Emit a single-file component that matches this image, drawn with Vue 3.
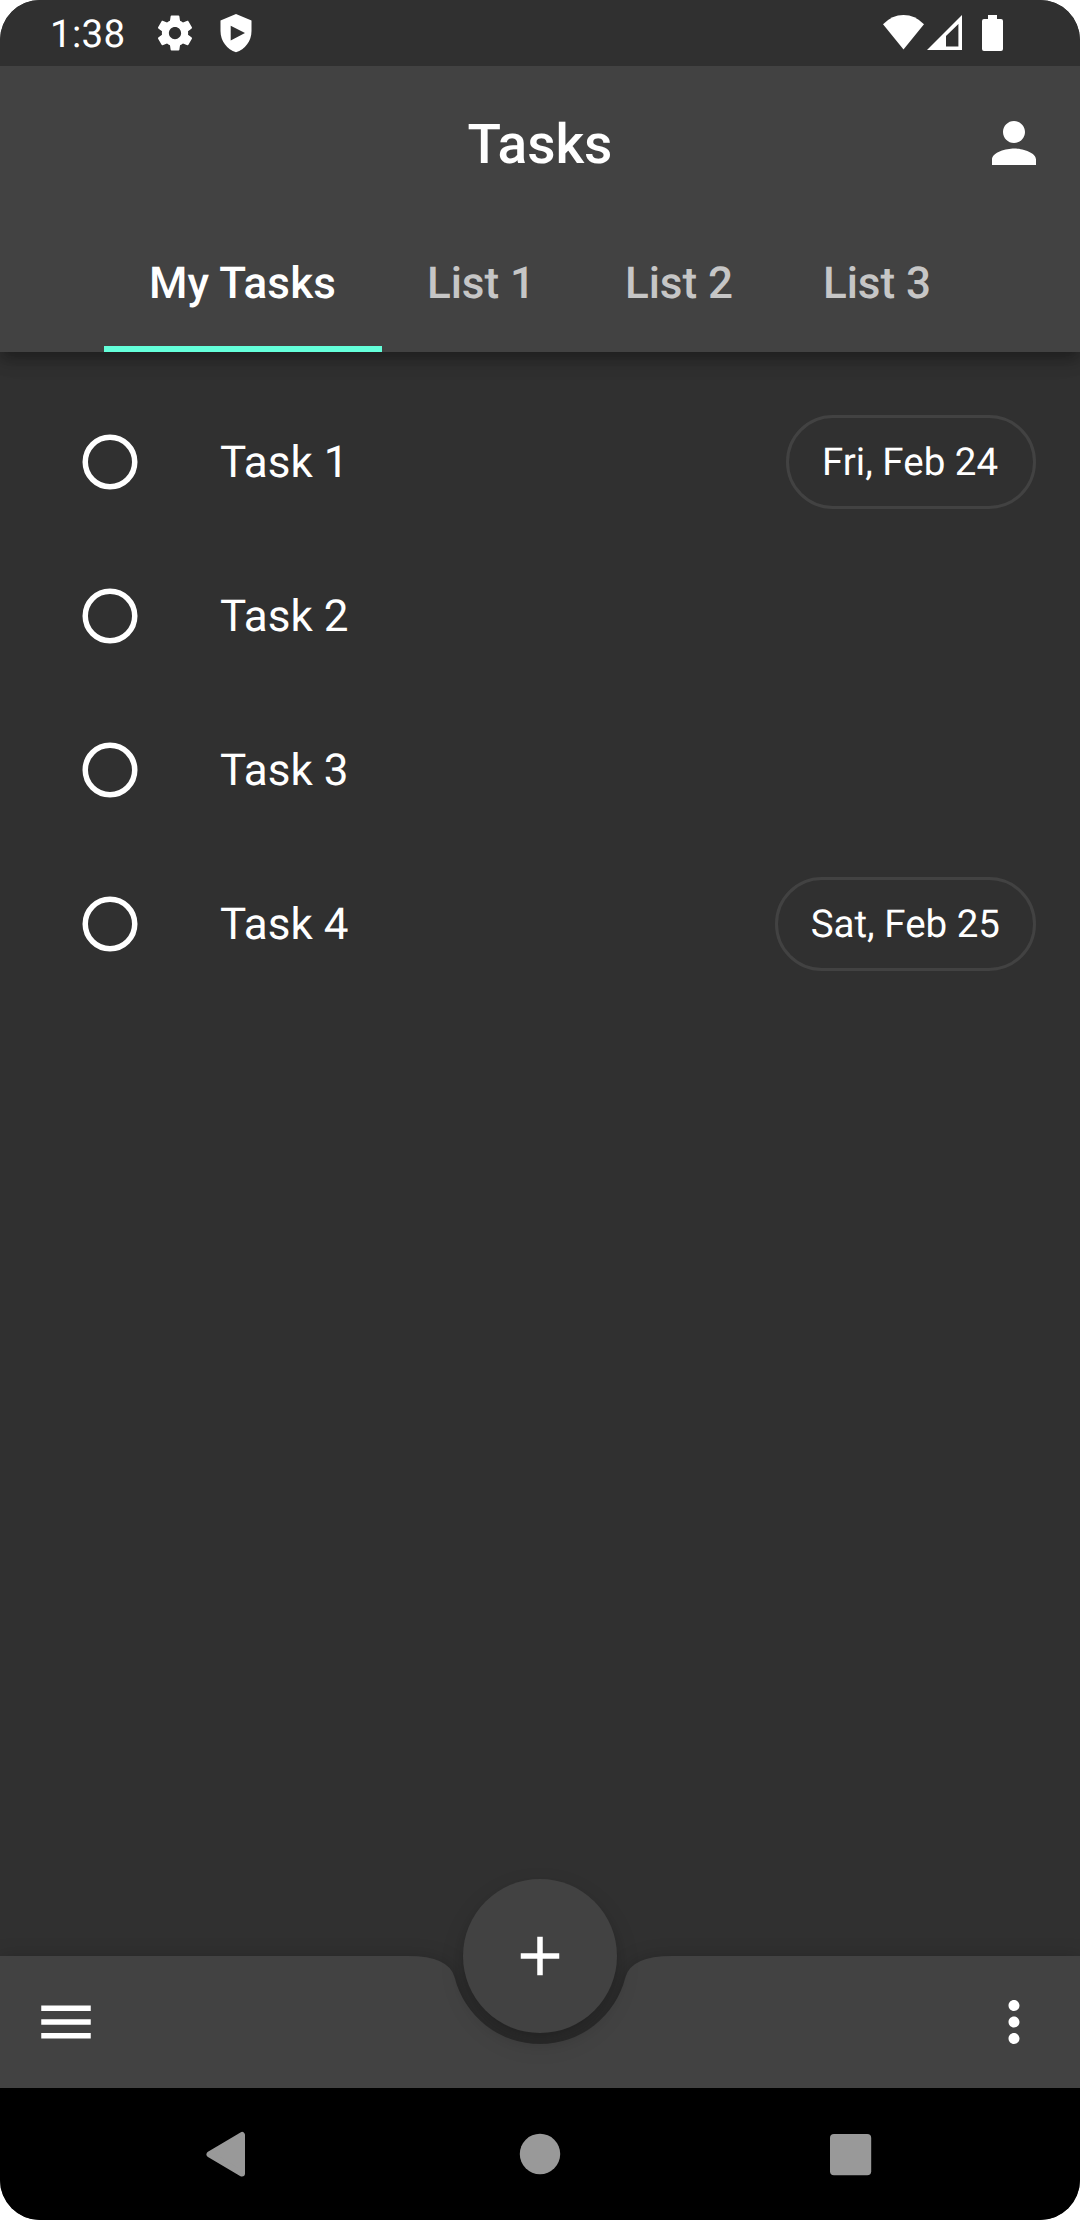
<script setup>
import { ref } from 'vue'

const tabs = ['My Tasks', 'List 1', 'List 2', 'List 3']
const activeTab = ref('My Tasks')
const tasks = [
  { title: 'Task 1', due: 'Fri, Feb 24' },
  { title: 'Task 2' },
  { title: 'Task 3' },
  { title: 'Task 4', due: 'Sat, Feb 25' },
]
</script>

<template>
  <div class="screen">
    <div class="status-bar">
      <span class="clock">1:38</span>
      <svg class="gear" viewBox="0 0 24 24" width="42" height="42">
        <path d="M19.43 12.98c.04-.32.07-.64.07-.98s-.03-.66-.07-.98l2.11-1.65c.19-.15.24-.42.12-.64l-2-3.46c-.12-.22-.39-.3-.61-.22l-2.49 1c-.52-.4-1.08-.73-1.69-.98l-.38-2.65C14.46 2.18 14.25 2 14 2h-4c-.25 0-.46.18-.49.42l-.38 2.65c-.61.25-1.17.59-1.69.98l-2.49-1c-.23-.09-.49 0-.61.22l-2 3.46c-.13.22-.07.49.12.64l2.11 1.65c-.04.32-.07.65-.07.98s.03.66.07.98l-2.11 1.65c-.19.15-.24.42-.12.64l2 3.46c.12.22.39.3.61.22l2.49-1c.52.4 1.08.73 1.69.98l.38 2.65c.03.24.24.42.49.42h4c.25 0 .46-.18.49-.42l.38-2.65c.61-.25 1.17-.59 1.69-.98l2.49 1c.23.09.49 0 .61-.22l2-3.46c.12-.22.07-.49-.12-.64l-2.11-1.65zM12 15.5c-1.93 0-3.5-1.57-3.5-3.5s1.57-3.5 3.5-3.5 3.5 1.57 3.5 3.5-1.57 3.5-3.5 3.5z" />
      </svg>
      <svg class="shield" viewBox="0 0 32 66" width="32" height="66">
        <path fill-rule="evenodd" d="M16 14 31.5 20.5V31C31.5 41 25 49.5 16 52.3C7 49.5.5 41 .5 31V20.5ZM10.7 25.8V40.4L25 33.1Z" />
      </svg>
      <span class="grow"></span>
      <svg viewBox="883 0 41 66" width="41" height="66">
        <path d="M883 24.3Q892 15 903.5 15T924 24.3L903.5 49.4Z" />
      </svg>
      <svg class="signal" viewBox="927 0 35 66" width="35" height="66">
        <path fill-rule="evenodd" d="M927 50L962 15V50ZM946 46.4H958.4V24L946 36Z" />
      </svg>
      <svg class="battery" viewBox="982 0 21 66" width="21" height="66">
        <path d="M988 15H997V19H1001Q1003 19 1003 21V49Q1003 51 1001 51H984Q982 51 982 49V21Q982 19 984 19H988Z" />
      </svg>
    </div>

    <header class="app-bar">
      <div class="title-row">
        <h1>Tasks</h1>
        <button class="icon-button" aria-label="Account">
          <svg viewBox="0 0 24 24"><path d="M12 12c2.21 0 4-1.79 4-4s-1.79-4-4-4-4 1.79-4 4 1.79 4 4 4zm0 2c-2.67 0-8 1.34-8 4v2h16v-2c0-2.66-5.33-4-8-4z" /></svg>
        </button>
      </div>
      <nav class="tabs">
        <button
          v-for="tab in tabs"
          :key="tab"
          class="tab"
          :class="{ active: tab === activeTab }"
          @click="activeTab = tab"
        >{{ tab }}</button>
      </nav>
    </header>

    <main class="list">
      <div v-for="task in tasks" :key="task.title" class="task">
        <svg class="radio" viewBox="0 0 24 24"><circle cx="12" cy="12" r="9" /></svg>
        <span class="name">{{ task.title }}</span>
        <span v-if="task.due" class="chip">{{ task.due }}</span>
      </div>
    </main>

    <footer class="bottom-bar">
      <svg class="notched" viewBox="0 0 1080 132">
        <path d="M0 0H408Q449.25 0 454.67 21.5A88 88 0 0 0 625.33 21.5Q630.75 0 672 0H1080V132H0Z" />
      </svg>
      <button class="icon-button" aria-label="Menu">
        <svg viewBox="0 0 24 24"><path d="M3 18h18v-2H3v2zm0-5h18v-2H3v2zm0-7v2h18V6H3z" /></svg>
      </button>
      <button class="fab" aria-label="Add task">
        <svg viewBox="0 0 24 24"><path d="M19 13h-6v6h-2v-6H5v-2h6V5h2v6h6v2z" /></svg>
      </button>
      <button class="icon-button" aria-label="More">
        <svg viewBox="0 0 24 24"><path d="M12 8c1.1 0 2-.9 2-2s-.9-2-2-2-2 .9-2 2 .9 2 2 2zm0 2c-1.1 0-2 .9-2 2s.9 2 2 2 2-.9 2-2-.9-2-2-2zm0 6c-1.1 0-2 .9-2 2s.9 2 2 2 2-.9 2-2-.9-2-2-2z" /></svg>
      </button>
    </footer>

    <div class="system-nav">
      <svg viewBox="0 0 66 66"><path class="back" d="M19.5 33.3L52 14V52.6Z" /></svg>
      <svg viewBox="0 0 66 66"><circle cx="33" cy="33" r="20.2" /></svg>
      <svg viewBox="0 0 66 66"><rect x="6" y="13" width="41.2" height="41.2" rx="4" /></svg>
    </div>
  </div>
</template>

<style>
body {
  margin: 0;
  background: #fff;
}
</style>

<style scoped>
.screen {
  width: 1080px;
  height: 2220px;
  border-radius: 40px;
  overflow: hidden;
  display: flex;
  flex-direction: column;
  background: #303030;
  color: #fff;
  font-family: Roboto, sans-serif;
  text-rendering: geometricPrecision;
}
svg {
  display: block;
  fill: currentColor;
  flex: none;
}
button {
  border: 0;
  padding: 0;
  background: none;
  color: inherit;
  font: inherit;
  text-rendering: inherit;
}
.status-bar {
  flex: none;
  height: 66px;
  box-sizing: border-box;
  padding: 0 77px 0 50px;
  display: flex;
  align-items: center;
  background: #303030;
  z-index: 2;
}
.clock {
  width: 74px;
  font-size: 38.5px;
  line-height: 66px;
  padding-top: 4px;
  letter-spacing: 0.3px;
  white-space: nowrap;
}
.gear {
  margin-left: 29.5px;
}
.shield {
  margin-left: 24px;
}
.grow {
  flex: 1;
}
.signal {
  margin-left: 3px;
}
.battery {
  margin-left: 20px;
}
.app-bar {
  flex: none;
  height: 286px;
  background: #424242;
  box-shadow: 0 5.5px 11px -2.75px rgba(0, 0, 0, 0.2), 0 11px 14px 0 rgba(0, 0, 0, 0.14),
    0 2.75px 27px 0 rgba(0, 0, 0, 0.12);
  z-index: 1;
}
.title-row {
  height: 154px;
  padding: 0 33px;
  display: grid;
  grid-template-columns: 66px 1fr 66px;
  align-items: center;
}
h1 {
  grid-column: 2;
  margin: 0;
  padding-top: 4px;
  text-align: center;
  font-size: 55px;
  font-weight: 500;
  line-height: 66px;
}
.icon-button,
.icon-button svg {
  width: 66px;
  height: 66px;
}
.tabs {
  height: 132px;
  display: flex;
  justify-content: center;
}
.tab {
  width: 198px;
  box-sizing: border-box;
  height: 132px;
  padding: 0 0 6px;
  border-bottom: 0 solid #64ffda;
  font-size: 44px;
  font-weight: 500;
  white-space: nowrap;
  color: #c6c6c6;
}
.tab.active {
  width: 278px;
  padding-bottom: 0;
  padding-right: 1px;
  border-bottom-width: 6px;
  letter-spacing: 0.15px;
  color: #fff;
}
.list {
  flex: 1;
  padding: 33px 44px 0 77px;
}
.task {
  height: 154px;
  display: flex;
  align-items: center;
}
.radio {
  width: 66px;
  height: 66px;
  fill: none;
  stroke: #fff;
  stroke-width: 2;
}
.name {
  flex: 1;
  margin-left: 77px;
  font-size: 44px;
}
.chip {
  height: 94px;
  min-width: 250px;
  box-sizing: border-box;
  padding: 0 33px;
  border: 3px solid #424242;
  border-radius: 47px;
  font-size: 38.5px;
  line-height: 90px;
}
.bottom-bar {
  flex: none;
  position: relative;
  height: 132px;
  box-sizing: border-box;
  padding: 0 33px;
  display: flex;
  align-items: center;
  justify-content: space-between;
}
.notched {
  position: absolute;
  inset: 0;
  width: 1080px;
  height: 132px;
  overflow: visible;
  fill: #424242;
  filter: drop-shadow(0 4px 10px rgba(0, 0, 0, 0.28));
}
.bottom-bar .icon-button {
  position: relative;
}
.fab {
  position: absolute;
  left: 463px;
  top: -77px;
  width: 154px;
  height: 154px;
  border-radius: 50%;
  background: #424242;
  display: flex;
  align-items: center;
  justify-content: center;
  box-shadow: 0 8px 14px -3px rgba(0, 0, 0, 0.2), 0 10px 26px 0 rgba(0, 0, 0, 0.1);
}
.fab svg {
  width: 66px;
  height: 66px;
}
.system-nav {
  flex: none;
  height: 132px;
  box-sizing: border-box;
  padding: 0 190px;
  display: flex;
  align-items: center;
  justify-content: space-between;
  background: #000;
  color: #999;
  z-index: 1;
}
.system-nav svg {
  width: 66px;
  height: 66px;
}
.back {
  stroke: currentColor;
  stroke-width: 6;
  stroke-linejoin: round;
}
</style>
